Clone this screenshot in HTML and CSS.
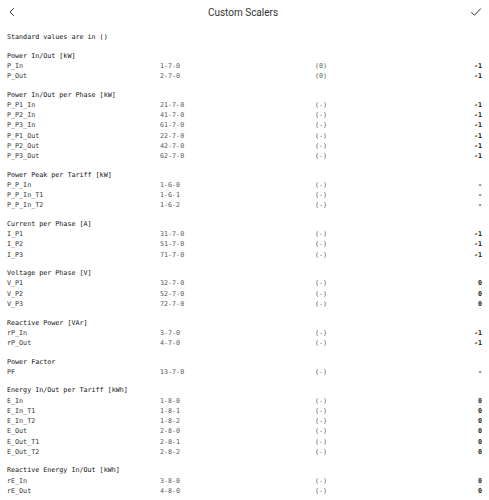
FILE: index.html
```html
<!DOCTYPE html>
<html>
<head>
<meta charset="utf-8">
<link rel="stylesheet" href="styles.css">
</head>
<body>
<div class="topbar">
  <svg class="icon back" width="8" height="10" viewBox="0 0 8 10"><path d="M5.5 1.5 L2 5 L5.5 8.5" fill="none" stroke="#333" stroke-width="1" stroke-linecap="round" stroke-linejoin="round"/></svg>
  <div class="title">Custom Scalers</div>
  <svg class="icon check" width="12" height="10" viewBox="0 0 12 10"><path d="M1.5 5.5 L4.5 8.2 L10.5 1.8" fill="none" stroke="#333" stroke-width="1" stroke-linecap="round" stroke-linejoin="round"/></svg>
</div>
<div class="content">
  <div class="note">Standard values are in ()</div>

  <div class="section">
    <div class="head">Power In/Out [kW]</div>
    <div class="row"><span class="lbl">P_In</span><span class="code">1-7-0</span><span class="std">(0)</span><span class="val">-1</span></div>
    <div class="row"><span class="lbl">P_Out</span><span class="code">2-7-0</span><span class="std">(0)</span><span class="val">-1</span></div>
  </div>

  <div class="section">
    <div class="head">Power In/Out per Phase [kW]</div>
    <div class="row"><span class="lbl">P_P1_In</span><span class="code">21-7-0</span><span class="std">(-)</span><span class="val">-1</span></div>
    <div class="row"><span class="lbl">P_P2_In</span><span class="code">41-7-0</span><span class="std">(-)</span><span class="val">-1</span></div>
    <div class="row"><span class="lbl">P_P3_In</span><span class="code">61-7-0</span><span class="std">(-)</span><span class="val">-1</span></div>
    <div class="row"><span class="lbl">P_P1_Out</span><span class="code">22-7-0</span><span class="std">(-)</span><span class="val">-1</span></div>
    <div class="row"><span class="lbl">P_P2_Out</span><span class="code">42-7-0</span><span class="std">(-)</span><span class="val">-1</span></div>
    <div class="row"><span class="lbl">P_P3_Out</span><span class="code">62-7-0</span><span class="std">(-)</span><span class="val">-1</span></div>
  </div>

  <div class="section">
    <div class="head">Power Peak per Tariff [kW]</div>
    <div class="row"><span class="lbl">P_P_In</span><span class="code">1-6-0</span><span class="std">(-)</span><span class="val">-</span></div>
    <div class="row"><span class="lbl">P_P_In_T1</span><span class="code">1-6-1</span><span class="std">(-)</span><span class="val">-</span></div>
    <div class="row"><span class="lbl">P_P_In_T2</span><span class="code">1-6-2</span><span class="std">(-)</span><span class="val">-</span></div>
  </div>

  <div class="section">
    <div class="head">Current per Phase [A]</div>
    <div class="row"><span class="lbl">I_P1</span><span class="code">31-7-0</span><span class="std">(-)</span><span class="val">-1</span></div>
    <div class="row"><span class="lbl">I_P2</span><span class="code">51-7-0</span><span class="std">(-)</span><span class="val">-1</span></div>
    <div class="row"><span class="lbl">I_P3</span><span class="code">71-7-0</span><span class="std">(-)</span><span class="val">-1</span></div>
  </div>

  <div class="section">
    <div class="head">Voltage per Phase [V]</div>
    <div class="row"><span class="lbl">V_P1</span><span class="code">32-7-0</span><span class="std">(-)</span><span class="val">0</span></div>
    <div class="row"><span class="lbl">V_P2</span><span class="code">52-7-0</span><span class="std">(-)</span><span class="val">0</span></div>
    <div class="row"><span class="lbl">V_P3</span><span class="code">72-7-0</span><span class="std">(-)</span><span class="val">0</span></div>
  </div>

  <div class="section">
    <div class="head">Reactive Power [VAr]</div>
    <div class="row"><span class="lbl">rP_In</span><span class="code">3-7-0</span><span class="std">(-)</span><span class="val">-1</span></div>
    <div class="row"><span class="lbl">rP_Out</span><span class="code">4-7-0</span><span class="std">(-)</span><span class="val">-1</span></div>
  </div>

  <div class="section">
    <div class="head">Power Factor</div>
    <div class="row"><span class="lbl">PF</span><span class="code">13-7-0</span><span class="std">(-)</span><span class="val">-</span></div>
  </div>

  <div class="section">
    <div class="head">Energy In/Out per Tariff [kWh]</div>
    <div class="row"><span class="lbl">E_In</span><span class="code">1-8-0</span><span class="std">(-)</span><span class="val">0</span></div>
    <div class="row"><span class="lbl">E_In_T1</span><span class="code">1-8-1</span><span class="std">(-)</span><span class="val">0</span></div>
    <div class="row"><span class="lbl">E_In_T2</span><span class="code">1-8-2</span><span class="std">(-)</span><span class="val">0</span></div>
    <div class="row"><span class="lbl">E_Out</span><span class="code">2-8-0</span><span class="std">(-)</span><span class="val">0</span></div>
    <div class="row"><span class="lbl">E_Out_T1</span><span class="code">2-8-1</span><span class="std">(-)</span><span class="val">0</span></div>
    <div class="row"><span class="lbl">E_Out_T2</span><span class="code">2-8-2</span><span class="std">(-)</span><span class="val">0</span></div>
  </div>

  <div class="section">
    <div class="head">Reactive Energy In/Out [kWh]</div>
    <div class="row"><span class="lbl">rE_In</span><span class="code">3-8-0</span><span class="std">(-)</span><span class="val">0</span></div>
    <div class="row"><span class="lbl">rE_Out</span><span class="code">4-8-0</span><span class="std">(-)</span><span class="val">0</span></div>
  </div>
</div>
</body>
</html>
```
FILE: styles.css
```css
html, body {
  margin: 0;
  padding: 0;
  background: #fff;
  overflow: hidden;
}
.topbar {
  height: 24px;
  display: flex;
  align-items: center;
  justify-content: space-between;
  padding: 0 7px 0 8px;
}
.icon {
  display: block;
}
.title {
  font-family: Roboto, "Liberation Sans", sans-serif;
  font-size: 10px;
  color: #333;
}
.content {
  padding: 8px 7px 0 7px;
  font-family: "DejaVu Sans Mono", "Liberation Mono", monospace;
  font-size: 6.7px;
  line-height: 10.25px;
  color: #333;
}
.note {
  color: #111;
}
.section {
  margin-top: 8.3px;
}
.head {
  color: #111;
}
.row {
  display: grid;
  grid-template-columns: 153px 155px 1fr auto;
  white-space: nowrap;
}
.lbl {
  color: #333;
}
.code, .std {
  color: #555;
}
.val {
  color: #111;
  font-weight: bold;
  text-align: right;
}
```
